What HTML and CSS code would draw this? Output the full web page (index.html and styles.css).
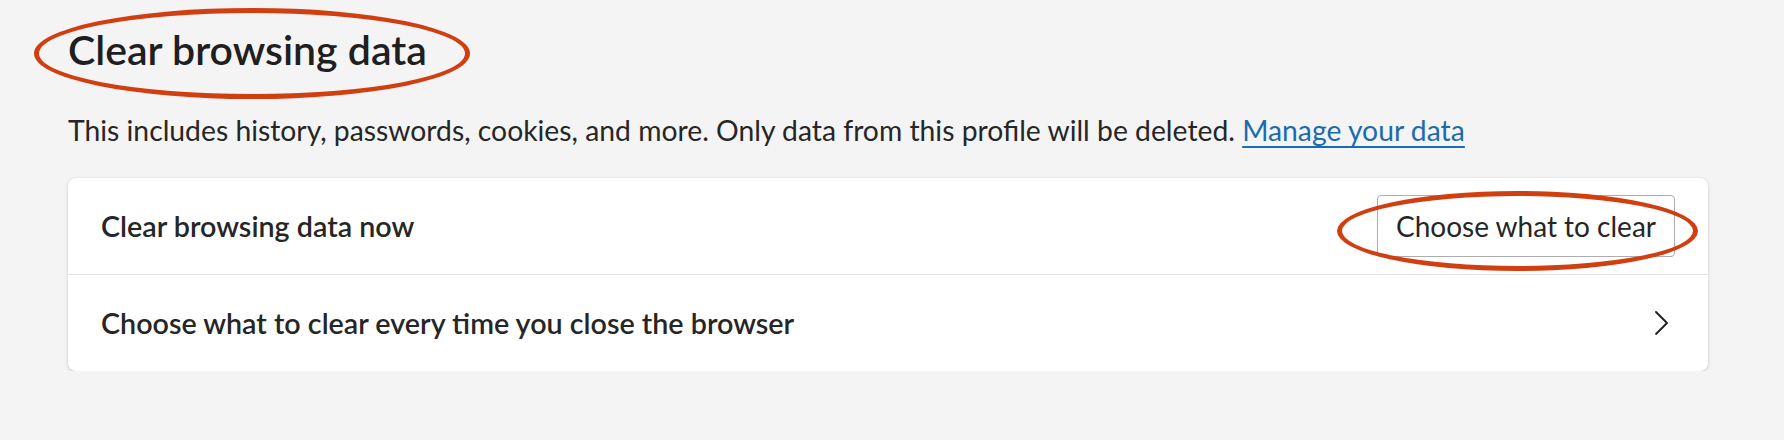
FILE: index.html
```html
<!DOCTYPE html>
<html lang="en">
<head>
    <meta charset="UTF-8">
    <meta name="viewport" content="width=device-width, initial-scale=1.0">
    <title>Clear browsing data</title>
    <link rel="stylesheet" href="styles.css">
</head>
<body>
    <div class="page">
        <div class="title-wrap">
            <h1 class="title">Clear browsing data</h1>
            <span class="mark mark-title"></span>
        </div>
        <p class="desc">This includes history, passwords, cookies, and more. Only data from this profile will be deleted. <a href="#" class="link">Manage your data</a></p>

        <div class="card">
            <div class="row">
                <span class="row-label">Clear browsing data now</span>
                <span class="btn-wrap">
                    <button class="btn">Choose what to clear</button>
                    <span class="mark mark-btn"></span>
                </span>
            </div>
            <div class="row">
                <span class="row-label">Choose what to clear every time you close the browser</span>
                <svg class="chevron" width="40" height="40" viewBox="0 0 20 20" fill="currentColor">
                    <path d="M7.65 4.15a.5.5 0 0 0 0 .7L12.79 10l-5.14 5.15a.5.5 0 0 0 .7.7l5.5-5.5a.5.5 0 0 0 0-.7l-5.5-5.5a.5.5 0 0 0-.7 0Z"/>
                </svg>
            </div>
        </div>
    </div>
</body>
</html>
```

FILE: styles.css
```css
body {
    margin: 0;
    padding: 0;
    background: #f4f4f4;
    color: #262626;
    font-family: Lato, "Open Sans", sans-serif;
}
.page {
    padding: 24px 76px 0 68px;
}
.title-wrap {
    position: relative;
    display: inline-block;
}
.title {
    margin: 0;
    font-size: 41px;
    line-height: 52px;
    font-weight: 600;
    color: #1f1f1f;
}
.mark {
    position: absolute;
    box-sizing: border-box;
    border: 5px solid #d13e10;
    border-radius: 50%;
    pointer-events: none;
}
.mark-title {
    left: -34px;
    top: -16px;
    width: 436px;
    height: 91px;
}
.desc {
    margin: 36px 0 0;
    font-size: 28.3px;
    line-height: 36px;
}
.link {
    color: #1b6bb0;
    text-decoration: underline;
    text-decoration-thickness: 2px;
    text-underline-offset: 5px;
}
.card {
    margin-top: 30px;
    background: #fff;
    border-radius: 8px;
    box-shadow: 0 2px 4px rgba(0, 0, 0, 0.12), 0 0 2px rgba(0, 0, 0, 0.1);
}
.row {
    display: flex;
    align-items: center;
    justify-content: space-between;
    height: 96px;
    padding: 0 33px 0 33px;
}
.row + .row {
    border-top: 1px solid #e3e3e3;
}
.row-label {
    font-size: 28.7px;
    line-height: 36px;
    font-weight: 600;
}
.btn-wrap {
    position: relative;
    display: inline-block;
}
.btn {
    display: block;
    height: 62px;
    padding: 0 18px;
    background: #fff;
    border: 1px solid #adadad;
    border-radius: 4px;
    font-family: inherit;
    font-size: 28px;
    line-height: 36px;
    color: #262626;
}
.mark-btn {
    left: -40px;
    top: -4px;
    width: 361px;
    height: 80px;
}
.chevron {
    margin-right: -5px;
    color: #242424;
}
```
